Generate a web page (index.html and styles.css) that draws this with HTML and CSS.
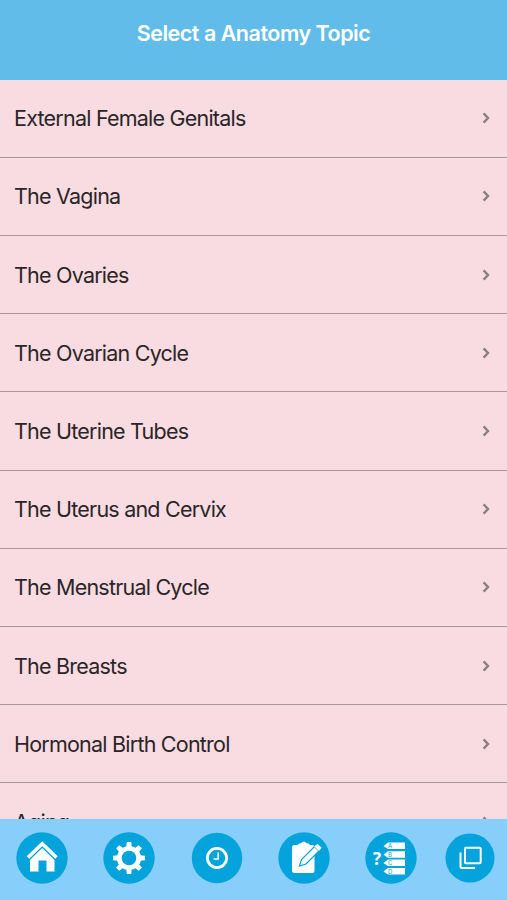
FILE: index.html
```
<!DOCTYPE html>
<html>

  <head>
    <meta charset="utf-8">
    <title>Anatomy Topics</title>
    <link rel="stylesheet" href="styles.css">
  </head>

  <body>
    <div class="header">
      <h1>Select a Anatomy Topic</h1>
    </div>

    <ul class="topics">
      <li><span class="name">External Female Genitals</span><svg class="arrow" viewBox="0 0 8 12"><path d="M1.6 1.4 L6 6 L1.6 10.6"/></svg></li>
      <li><span class="name">The Vagina</span><svg class="arrow" viewBox="0 0 8 12"><path d="M1.6 1.4 L6 6 L1.6 10.6"/></svg></li>
      <li><span class="name">The Ovaries</span><svg class="arrow" viewBox="0 0 8 12"><path d="M1.6 1.4 L6 6 L1.6 10.6"/></svg></li>
      <li><span class="name">The Ovarian Cycle</span><svg class="arrow" viewBox="0 0 8 12"><path d="M1.6 1.4 L6 6 L1.6 10.6"/></svg></li>
      <li><span class="name">The Uterine Tubes</span><svg class="arrow" viewBox="0 0 8 12"><path d="M1.6 1.4 L6 6 L1.6 10.6"/></svg></li>
      <li><span class="name">The Uterus and Cervix</span><svg class="arrow" viewBox="0 0 8 12"><path d="M1.6 1.4 L6 6 L1.6 10.6"/></svg></li>
      <li><span class="name">The Menstrual Cycle</span><svg class="arrow" viewBox="0 0 8 12"><path d="M1.6 1.4 L6 6 L1.6 10.6"/></svg></li>
      <li><span class="name">The Breasts</span><svg class="arrow" viewBox="0 0 8 12"><path d="M1.6 1.4 L6 6 L1.6 10.6"/></svg></li>
      <li><span class="name">Hormonal Birth Control</span><svg class="arrow" viewBox="0 0 8 12"><path d="M1.6 1.4 L6 6 L1.6 10.6"/></svg></li>
      <li><span class="name">Aging</span><svg class="arrow" viewBox="0 0 8 12"><path d="M1.6 1.4 L6 6 L1.6 10.6"/></svg></li>
    </ul>

    <div class="tabs">
      <!-- home -->
      <svg class="tab" viewBox="0 0 52 52">
        <circle class="disc" cx="26" cy="26" r="25.7"/>
        <path class="fill" d="M14 24 L26 13 L38.5 24 V39.5 H30.5 V28.5 H22.5 V39.5 H14 Z"/>
        <path class="roof-gap" d="M11 26.5 L26.2 11.8 L41.5 26.5"/>
        <path class="roof" d="M12 25.5 L26.2 11.8 L40.5 25.5"/>
      </svg>
      <!-- settings -->
      <svg class="tab" viewBox="0 0 52 52">
        <circle class="disc" cx="26" cy="26" r="25.7"/>
        <circle class="gear" cx="26" cy="26" r="9.7"/>
        <g class="fill">
          <path id="tooth" d="M23.2 15.5 L23.8 10 H28.2 L28.8 15.5 Z"/>
          <use href="#tooth" transform="rotate(45 26 26)"/>
          <use href="#tooth" transform="rotate(90 26 26)"/>
          <use href="#tooth" transform="rotate(135 26 26)"/>
          <use href="#tooth" transform="rotate(180 26 26)"/>
          <use href="#tooth" transform="rotate(225 26 26)"/>
          <use href="#tooth" transform="rotate(270 26 26)"/>
          <use href="#tooth" transform="rotate(315 26 26)"/>
        </g>
      </svg>
      <!-- history -->
      <svg class="tab" viewBox="0 0 52 52">
        <circle class="disc" cx="26" cy="26" r="25.2"/>
        <circle class="clock" cx="26" cy="26" r="9.6"/>
        <path class="hands" d="M27.2 20.5 V27 H22.5"/>
      </svg>
      <!-- notes -->
      <svg class="tab" viewBox="0 0 52 52">
        <circle class="disc" cx="26" cy="26" r="25.7"/>
        <path class="fill" d="M16 13 H19.5 Q20 11.5 23 11.3 Q26 7.5 28.5 11.3 Q31.5 11.5 32 13 H34 Q36.5 13 36.5 15.500 V38.5 Q36.5 41 34 41 H16.5 Q14 41 14 38.5 V15.500 Q14 13 16 13 Z"/>
        <path class="pencil" d="M21.5 34 L23.5 27.5 L36.5 14.5 L41 19 L28 32 Z"/>
        <path class="fill" d="M36.2 14.5 L39.5 11.8 L43.5 15.8 L41 19 Z"/>
      </svg>
      <!-- quiz -->
      <svg class="tab" viewBox="0 0 52 52">
        <circle class="disc" cx="26" cy="26" r="25.7"/>
        <text class="question" x="8" y="32.5">?</text>
        <g class="fill">
          <path d="M18.5 14 L23 10.5 H40 V17 H23 Z"/>
          <path d="M18.5 22.7 L23 19.2 H40 V25.7 H23 Z"/>
          <path d="M18.5 31 L23 27.5 H40 V34 H23 Z"/>
          <path d="M18.5 39.5 L23 36 H40 V42.5 H23 Z"/>
        </g>
        <g class="answers">
          <text x="23" y="16">A</text>
          <text x="23" y="24.7">B</text>
          <text x="23" y="33">C</text>
          <text x="23" y="41.5">D</text>
        </g>
      </svg>
      <!-- cards -->
      <svg class="tab last" viewBox="0 0 52 52">
        <circle class="disc" cx="26" cy="26" r="24.5"/>
        <rect class="card" x="21" y="15.8" width="15.7" height="15.5" rx="1"/>
        <path class="card" d="M16.5 20.5 V34.5 Q16.5 36 18 36 H31"/>
      </svg>
    </div>
  </body>
</html>
```
FILE: styles.css
```
body{
  margin:0;
  height:100vh;
  display:flex;
  flex-direction:column;
  overflow:hidden;
  background-color:#f8dce1;
  font-family:Inter, "Liberation Sans", sans-serif;
}

.header{
  flex:none;
  height:79.5px;
  background-color:#62bce9;
  text-align:center;
}

.header h1{
  margin:0;
  padding-top:19px;
  font-size:21.5px;
  line-height:28px;
  font-weight:600;
  letter-spacing:-0.48px;
  color:white;
}

.topics{
  flex:1;
  min-height:0;
  overflow:hidden;
  margin:0;
  padding:0;
  list-style:none;
}

.topics li{
  box-sizing:border-box;
  height:78.22px;
  padding:0 17px 0 14px;
  display:flex;
  align-items:center;
  justify-content:space-between;
  border-bottom:1px solid #a8989c;
}

.name{
  font-size:21.5px;
  letter-spacing:-0.78px;
  color:#2b2527;
}

.arrow{
  width:8px;
  height:12px;
  fill:none;
  stroke:#8c7f83;
  stroke-width:2.4;
}

.tabs{
  flex:none;
  box-sizing:border-box;
  height:81px;
  padding:12.5px 10.5px 0 16px;
  display:flex;
  justify-content:space-between;
  align-items:flex-start;
  background-color:#87cefa;
}

.tab{
  width:52px;
  height:52px;
}

.last{
  margin-left:-8px;
}

.disc{
  fill:#05a3dc;
}

.fill{
  fill:white;
}

.roof{
  fill:none;
  stroke:white;
  stroke-width:3.6;
}

.roof-gap{
  fill:none;
  stroke:#05a3dc;
  stroke-width:6;
}

.gear{
  fill:none;
  stroke:white;
  stroke-width:4.8;
}

.clock{
  fill:none;
  stroke:white;
  stroke-width:2.8;
}

.hands{
  fill:none;
  stroke:white;
  stroke-width:1.6;
}

.pencil{
  fill:white;
  stroke:#05a3dc;
  stroke-width:1.2;
}

.question{
  font-size:17px;
  font-weight:700;
  font-family:"Open Sans", sans-serif;
  fill:white;
}

.answers{
  font-size:6px;
  fill:#05a3dc;
}

.card{
  fill:none;
  stroke:white;
  stroke-width:2;
}
```
